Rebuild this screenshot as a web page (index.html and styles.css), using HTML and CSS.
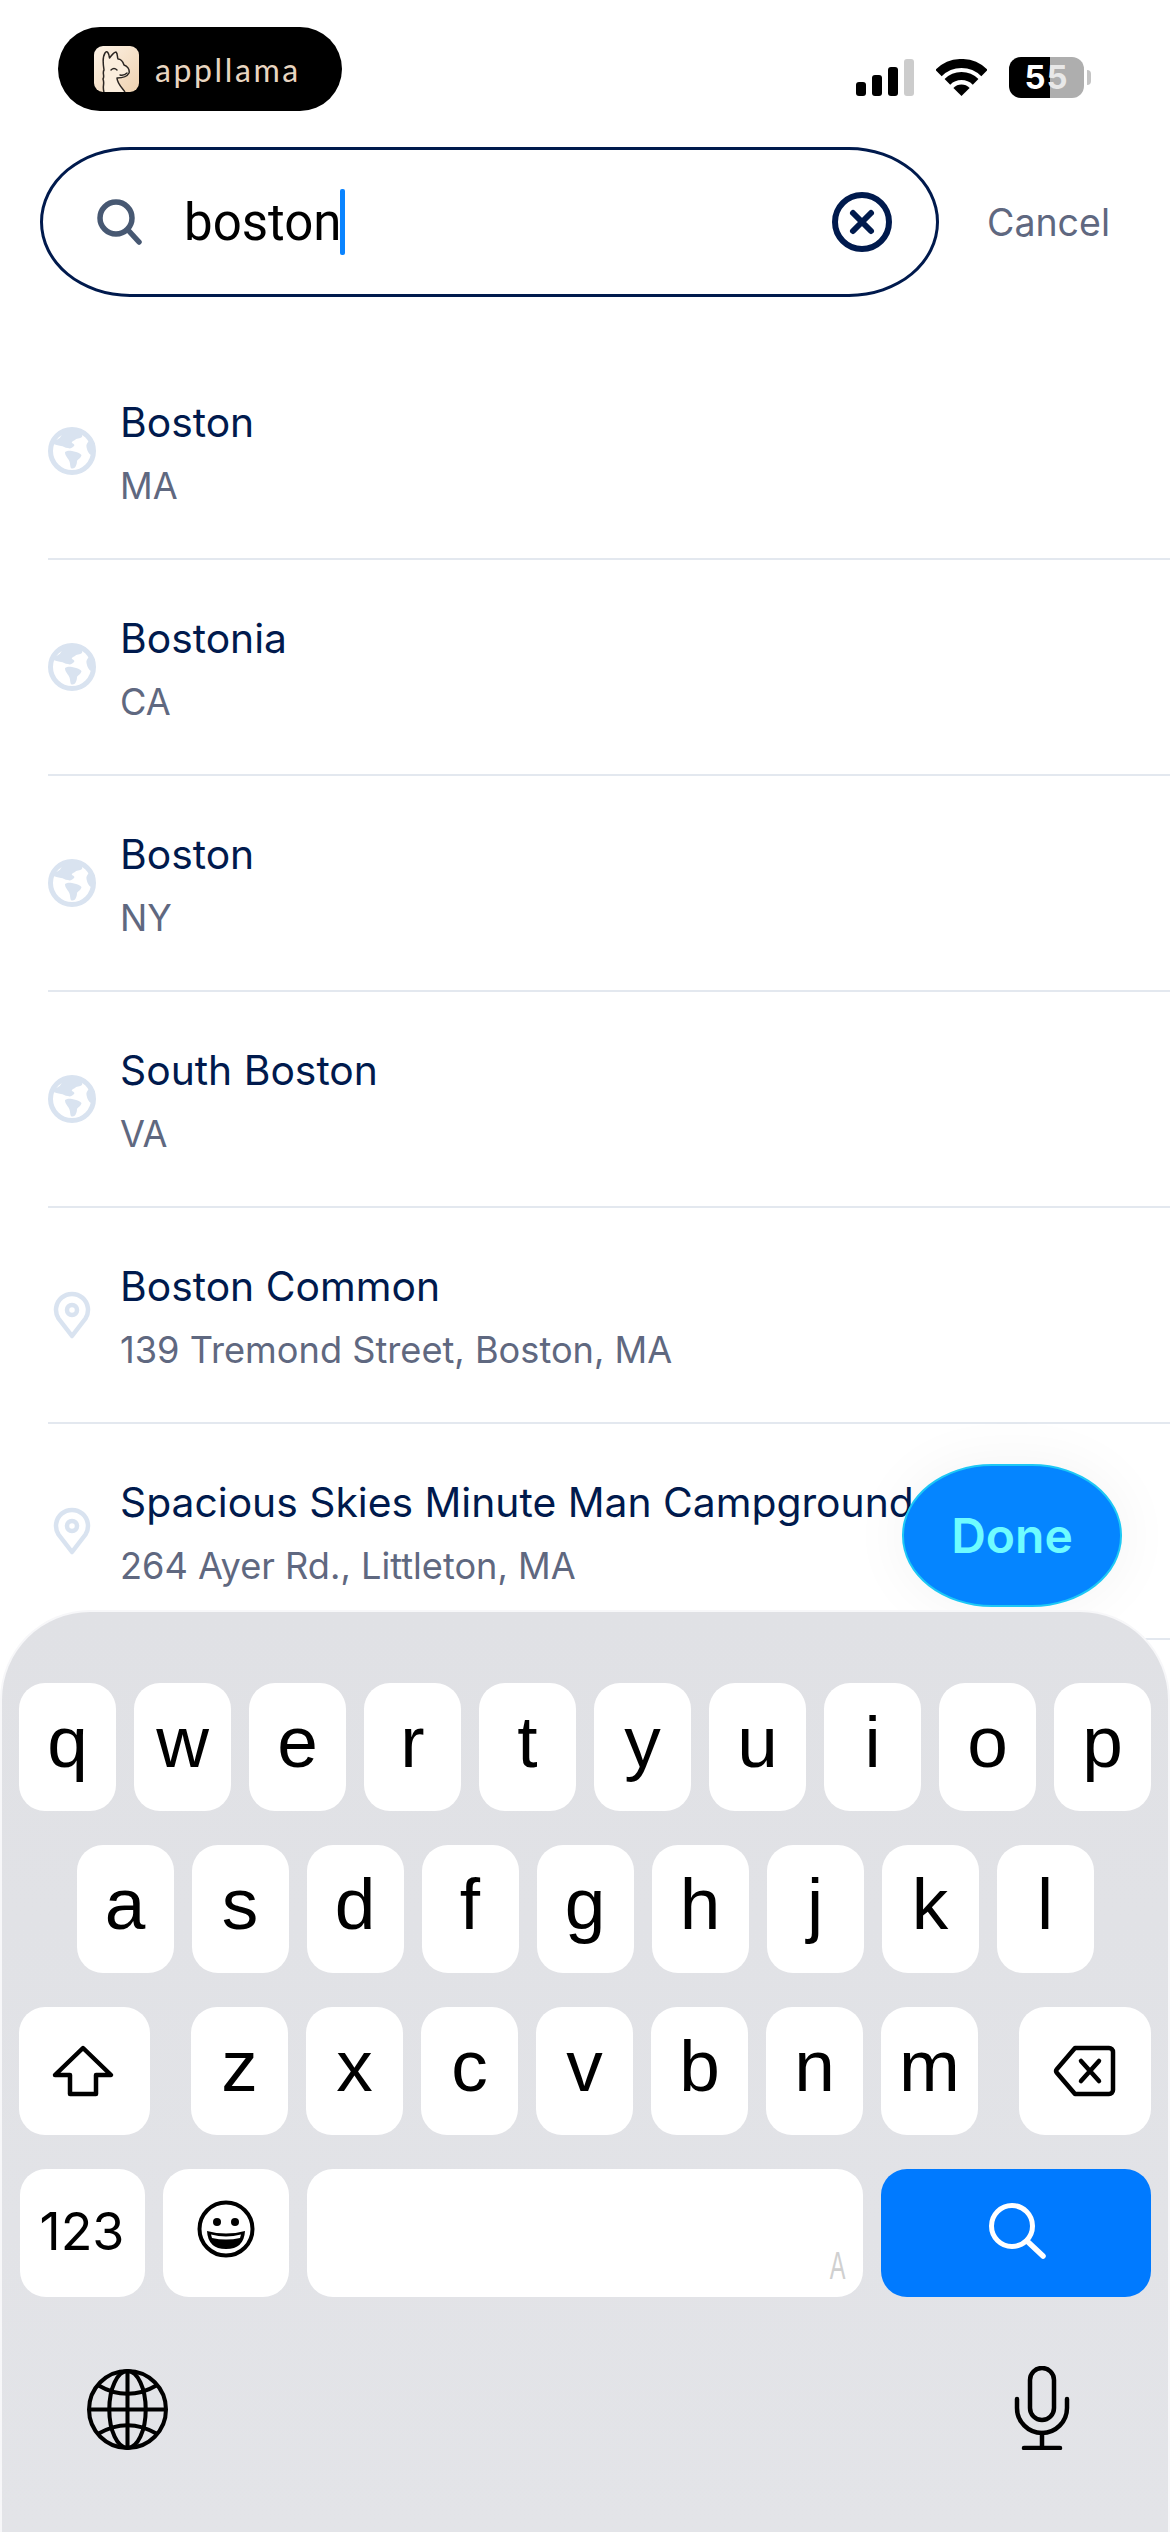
FILE: index.html
```html
<!DOCTYPE html>
<html lang="en">
<head>
    <meta charset="UTF-8">
    <meta name="viewport" content="width=device-width, initial-scale=1.0">
    <title>Search places</title>
    <link rel="stylesheet" href="styles.css">
</head>
<body>
    <div class="phone">
        <!-- Status bar -->
        <div class="status-bar">
            <div class="app-pill">
                <svg class="app-icon" viewBox="0 0 45 46">
                    <defs>
                        <linearGradient id="tan" x1="0" y1="0" x2="1" y2="1">
                            <stop offset="0" stop-color="#fdf3e6"/>
                            <stop offset="1" stop-color="#efd2b0"/>
                        </linearGradient>
                    </defs>
                    <rect width="45" height="46" rx="9" fill="url(#tan)"/>
                    <path d="M10 46 C8 40 11 38 9 33 C11 30 8 27 10 24 C9 18 9 10 11 7 C13 4 15 7 15.5 12 C17 10 20 6 22 6 C24 8 23 11 24 13 C27 13 29 16 30 19 C33 20 36 23 35 27 C33 31 28 32 23 32 C23 37 28 42 31 46" fill="#fbeedd" stroke="#2b2622" stroke-width="1.5" stroke-linejoin="round"/>
                    <path d="M17 24 q3 -3 6 0 M26 29 q4 1 7 -2" fill="none" stroke="#2b2622" stroke-width="1.4" stroke-linecap="round"/>
                </svg>
                <span class="app-name">appllama</span>
            </div>
            <div class="status-icons">
                <div class="signal">
                    <span class="bar bar-1"></span>
                    <span class="bar bar-2"></span>
                    <span class="bar bar-3"></span>
                    <span class="bar bar-4"></span>
                </div>
                <svg class="wifi" viewBox="0 0 51 37">
                    <path d="M25.5 37 L17.4 28.9 A11.5 11.5 0 0 1 33.6 28.9 Z"/>
                    <path d="M11.4 22.9 A20 20 0 0 1 39.6 22.9" fill="none" stroke="#000" stroke-width="8"/>
                    <path d="M2.5 14 A32.5 32.5 0 0 1 48.5 14" fill="none" stroke="#000" stroke-width="9"/>
                </svg>
                <div class="battery"><span>5</span><span class="battery-dim">5</span></div>
            </div>
        </div>

        <!-- Search -->
        <div class="search-row">
            <div class="search-box">
                <svg class="search-icon" viewBox="0 0 46 46">
                    <circle cx="19" cy="19" r="16" fill="none" stroke="#475872" stroke-width="5.5"/>
                    <path d="M31 31 L42 43" fill="none" stroke="#475872" stroke-width="5.5" stroke-linecap="round"/>
                </svg>
                <span class="search-text">boston</span><span class="caret"></span>
                <svg class="clear-icon" viewBox="0 0 60 60">
                    <circle cx="30" cy="30" r="27" fill="none" stroke="#001a4d" stroke-width="6"/>
                    <path d="M21 21 L39 39 M39 21 L21 39" fill="none" stroke="#001a4d" stroke-width="6" stroke-linecap="round"/>
                </svg>
            </div>
            <span class="cancel">Cancel</span>
        </div>

        <!-- Results -->
        <div class="results">
            <div class="result">
                <svg class="result-icon"><use href="#globe"/></svg>
                <div class="result-text">
                    <div class="result-title">Boston</div>
                    <div class="result-sub">MA</div>
                </div>
            </div>
            <div class="result">
                <svg class="result-icon"><use href="#globe"/></svg>
                <div class="result-text">
                    <div class="result-title">Bostonia</div>
                    <div class="result-sub">CA</div>
                </div>
            </div>
            <div class="result">
                <svg class="result-icon"><use href="#globe"/></svg>
                <div class="result-text">
                    <div class="result-title">Boston</div>
                    <div class="result-sub">NY</div>
                </div>
            </div>
            <div class="result">
                <svg class="result-icon"><use href="#globe"/></svg>
                <div class="result-text">
                    <div class="result-title">South Boston</div>
                    <div class="result-sub">VA</div>
                </div>
            </div>
            <div class="result">
                <svg class="result-icon"><use href="#pin"/></svg>
                <div class="result-text">
                    <div class="result-title">Boston Common</div>
                    <div class="result-sub">139 Tremond Street, Boston, MA</div>
                </div>
            </div>
            <div class="result">
                <svg class="result-icon"><use href="#pin"/></svg>
                <div class="result-text">
                    <div class="result-title">Spacious Skies Minute Man Campground</div>
                    <div class="result-sub">264 Ayer Rd., Littleton, MA</div>
                </div>
            </div>
        </div>

        <button class="done-button">Done</button>

        <!-- Keyboard -->
        <div class="keyboard">
            <div class="kb-row">
                <div class="key">q</div><div class="key">w</div><div class="key">e</div><div class="key">r</div><div class="key">t</div>
                <div class="key">y</div><div class="key">u</div><div class="key">i</div><div class="key">o</div><div class="key">p</div>
            </div>
            <div class="kb-row">
                <div class="key">a</div><div class="key">s</div><div class="key">d</div><div class="key">f</div><div class="key">g</div>
                <div class="key">h</div><div class="key">j</div><div class="key">k</div><div class="key">l</div>
            </div>
            <div class="kb-row">
                <div class="key key-shift">
                    <svg width="64" height="54" viewBox="0 0 64 54">
                        <path d="M32 4 L60 31 H45 V50 H19 V31 H4 Z" fill="none" stroke="#000" stroke-width="4.5" stroke-linejoin="round"/>
                    </svg>
                </div>
                <div class="key">z</div><div class="key">x</div><div class="key">c</div><div class="key">v</div>
                <div class="key">b</div><div class="key">n</div><div class="key">m</div>
                <div class="key key-delete">
                    <svg width="64" height="54" viewBox="0 0 64 54">
                        <path d="M22 4 H56 a4 4 0 0 1 4 4 V46 a4 4 0 0 1 -4 4 H22 L4 29 a3 3 0 0 1 0 -4 Z" fill="none" stroke="#000" stroke-width="4.5" stroke-linejoin="round"/>
                        <path d="M28 17 L46 37 M46 17 L28 37" fill="none" stroke="#000" stroke-width="4.5" stroke-linecap="round"/>
                    </svg>
                </div>
            </div>
            <div class="kb-row">
                <div class="key key-123">123</div>
                <div class="key key-emoji">
                    <svg width="58" height="58" viewBox="0 0 58 58">
                        <circle cx="29" cy="29" r="26.5" fill="none" stroke="#000" stroke-width="4"/>
                        <circle cx="20" cy="22" r="4"/>
                        <circle cx="38" cy="22" r="4"/>
                        <path d="M10 31 Q29 36 48 31 Q47 49 29 49 Q11 49 10 31 Z"/>
                        <path d="M14 34.5 Q29 38.5 44 34.5 L43 38 Q29 41 15 38 Z" fill="#fff"/>
                    </svg>
                </div>
                <div class="key key-space"><span class="space-mark">A</span></div>
                <div class="key key-search">
                    <svg width="66" height="66" viewBox="0 0 66 66">
                        <circle cx="24" cy="24" r="20.5" fill="none" stroke="#fff" stroke-width="5"/>
                        <path d="M39 39 L55 54" fill="none" stroke="#fff" stroke-width="5.5" stroke-linecap="round"/>
                    </svg>
                </div>
            </div>
            <div class="kb-tools">
                <svg class="kb-globe" viewBox="0 0 80 80">
                    <g fill="none" stroke="#000" stroke-width="4">
                        <circle cx="40" cy="40" r="38"/>
                        <ellipse cx="40" cy="40" rx="18" ry="38"/>
                        <path d="M40 2 V78 M2 40 H78"/>
                        <path d="M11 16 Q40 33 69 16 M11 64 Q40 47 69 64"/>
                    </g>
                </svg>
                <svg class="kb-mic" viewBox="0 0 56 84">
                    <g fill="none" stroke="#000" stroke-width="4.5" stroke-linecap="round">
                        <rect x="16" y="2" width="24" height="52" rx="12"/>
                        <path d="M3 33 V42 A25 25 0 0 0 53 42 V33"/>
                        <path d="M28 67 V82 M10 82 H46"/>
                    </g>
                </svg>
            </div>
        </div>
    </div>

    <!-- Shared result icons -->
    <svg class="icon-defs">
        <symbol id="globe" viewBox="0 0 48 48">
            <circle cx="24" cy="24" r="21.5" fill="none" stroke="#d9e3f0" stroke-width="5"/>
            <path d="M17 3 L35 4 L34 10 C32 12 28 11 27 13 C25 14 23 15 24 16 C26 17 27 18 26 19 C24 21 22 22 20 21 C17 21 15 19 13 19 C10 18 7 18 4 16 C7 13 12 12 13 9 C14 7 15 5 17 3 Z" fill="#d9e3f0"/>
            <path d="M17 25 C20 23 24 24 26 24.5 C29 25 32 26 33.5 28 C33 31 30 32 29 34 C29 37 28 39 27 40.5 C25 42 23 42 22.5 40 C22 37 22 35 21 33.5 C20 31 17 29 17 25 Z" fill="#d9e3f0"/>
            <path d="M41 14 C39 16 38 18 38.5 20 C39 23 40 25 41.5 27 C43 28 45 29 47 29 L47 16 Z" fill="#d9e3f0"/>
        </symbol>
        <symbol id="pin" viewBox="0 0 48 48">
            <path d="M24 45 L10.5 27.5 A16 16 0 1 1 37.5 27.5 Z" fill="none" stroke="#d9e3f0" stroke-width="4.5" stroke-linejoin="round"/>
            <circle cx="24" cy="19" r="5" fill="none" stroke="#d9e3f0" stroke-width="4.5"/>
        </symbol>
    </svg>
</body>
</html>
```

FILE: styles.css
```css
* {
    box-sizing: border-box;
}

body {
    margin: 0;
    background: #fff;
    font-family: Inter, "Liberation Sans", sans-serif;
}

.phone {
    position: relative;
    width: 1170px;
    height: 2532px;
    overflow: hidden;
    background: #fff;
}

.icon-defs {
    display: none;
}

/* Status bar */
.status-bar {
    display: flex;
    justify-content: space-between;
    align-items: center;
    height: 111px;
    padding: 27px 79px 0 58px;
}

.app-pill {
    display: flex;
    align-items: center;
    gap: 16px;
    width: 284px;
    height: 84px;
    padding-left: 36px;
    border-radius: 42px;
    background: #000;
}

.app-icon {
    width: 45px;
    height: 46px;
}

.app-name {
    color: #e8d5c0;
    font-family: Lato, sans-serif;
    font-size: 32px;
    letter-spacing: 2.6px;
}

.status-icons {
    display: flex;
    align-items: center;
    gap: 22px;
    padding: 16px 7px 0 0;
}

.signal {
    display: flex;
    align-items: flex-end;
    gap: 6px;
    height: 38px;
}

.bar {
    width: 10px;
    border-radius: 3px;
    background: #000;
}

.bar-1 { height: 14px; }
.bar-2 { height: 21px; }
.bar-3 { height: 29px; }
.bar-4 { height: 37px; background: #ccc; }

.wifi {
    width: 51px;
    height: 37px;
}

.battery {
    position: relative;
    display: flex;
    justify-content: center;
    align-items: center;
    width: 75px;
    height: 41px;
    border-radius: 12px;
    background: linear-gradient(90deg, #000 55%, #aeaeae 55%);
    color: #fff;
    font-size: 33px;
    font-weight: 700;
    letter-spacing: 1px;
}

.battery::after {
    content: "";
    position: absolute;
    top: 13px;
    right: -7px;
    width: 4px;
    height: 15px;
    border-radius: 0 4px 4px 0;
    background: #c4c4c4;
}

.battery-dim {
    color: #e8e8e8;
}

/* Search */
.search-row {
    display: flex;
    align-items: center;
    height: 150px;
    margin-top: 36px;
    padding-left: 40px;
}

.search-box {
    display: flex;
    align-items: center;
    width: 899px;
    height: 150px;
    padding: 0 44px 0 54px;
    border: 3px solid #001a4d;
    border-radius: 90px / 75px;
}

.search-icon {
    width: 46px;
    height: 46px;
}

.search-text {
    margin-left: 41px;
    color: #000;
    font-family: Roboto, sans-serif;
    font-size: 51px;
}

.caret {
    width: 5px;
    height: 66px;
    margin-left: -1px;
    border-radius: 2px;
    background: #0a84ff;
}

.clear-icon {
    width: 60px;
    height: 60px;
    margin-left: auto;
}

.cancel {
    margin-left: 48px;
    color: #5f6880;
    font-size: 37.5px;
}

/* Results */
.results {
    margin-top: 47px;
    padding-left: 48px;
}

.result {
    display: flex;
    align-items: center;
    gap: 24px;
    height: 216px;
    border-bottom: 2px solid #e3e8ef;
}

.result-icon {
    flex: none;
    width: 48px;
    height: 48px;
}

.result-text {
    padding-top: 3px;
}

.result-title {
    color: #001a4d;
    font-size: 40.8px;
    line-height: 48px;
    white-space: nowrap;
}

.result-sub {
    margin-top: 18px;
    color: #5f6880;
    font-size: 36.2px;
    line-height: 44px;
}

/* Floating button */
.done-button {
    position: absolute;
    top: 1464px;
    left: 902px;
    width: 220px;
    height: 143px;
    border: 2px solid #1dc8f5;
    border-radius: 90px / 71px;
    background: #0585ff;
    box-shadow: 0 0 60px rgba(0, 0, 0, 0.05);
    color: #6ffcff;
    font-family: Inter, sans-serif;
    font-size: 48px;
    font-weight: 600;
}

/* Keyboard */
.keyboard {
    position: absolute;
    top: 1610px;
    left: 0;
    right: 0;
    bottom: 0;
    padding-top: 71px;
    border: 2px solid #f7f7f9;
    border-bottom: none;
    border-radius: 90px 90px 0 0;
    background: linear-gradient(#e0e1e5, #e3e4e8);
}

.kb-row {
    display: flex;
    justify-content: center;
    gap: 18px;
    height: 128px;
    margin-bottom: 34px;
}

.key {
    display: flex;
    justify-content: center;
    align-items: center;
    width: 97px;
    padding-bottom: 11px;
    border-radius: 26px;
    background: #fff;
    color: #000;
    font-family: "Liberation Sans", sans-serif;
    font-size: 73px;
}

.key-shift {
    width: 131px;
    margin-right: 23px;
    padding: 0 3px 0 0;
}

.key-delete {
    width: 132px;
    margin-left: 23px;
    padding-bottom: 0;
}

.key-123 {
    width: 125px;
    padding-bottom: 4px;
    font-family: Inter, sans-serif;
    font-size: 52px;
}

.key-emoji {
    width: 126px;
    padding-bottom: 8px;
}

.key-space {
    justify-content: flex-end;
    align-items: flex-end;
    width: 556px;
    padding: 0 17px 17px 0;
}

.space-mark {
    color: #d0d0d0;
    font-size: 38px;
    line-height: 28px;
    transform: scaleX(0.62);
    transform-origin: right;
}

.key-search {
    width: 270px;
    padding: 4px 0 0 10px;
    background: #007aff;
}

.kb-tools {
    display: flex;
    justify-content: space-between;
    align-items: flex-start;
    padding: 35px 98px 0 85px;
}

.kb-globe {
    width: 81px;
    height: 81px;
    margin-top: 3px;
}

.kb-mic {
    width: 56px;
    height: 84px;
}
```
